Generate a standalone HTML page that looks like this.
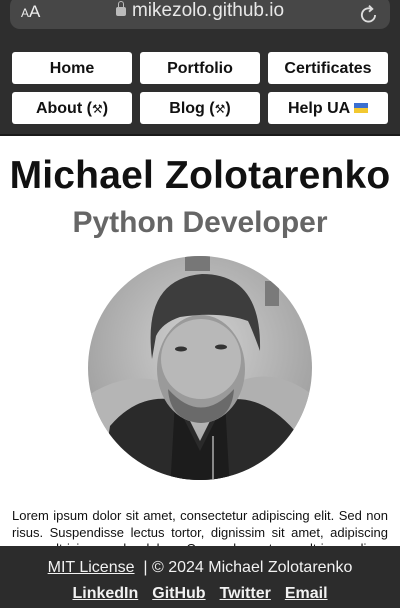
<!DOCTYPE html>
<html><head><meta charset="utf-8"><style>
*{margin:0;padding:0;box-sizing:border-box}
body{width:400px;height:608px;overflow:hidden;background:#fff;font-family:"Liberation Sans",Arial,sans-serif;position:relative}
.top{position:absolute;left:0;top:0;width:400px;height:136px;background:#2e2e2e;border-bottom:2px solid #1a1a1a}
.url{position:absolute;left:10px;top:-4px;width:380px;height:33px;background:#474747;border-radius:10px;color:#eee}
.aa{position:absolute;left:11px;top:6px;font-size:17px}
.aa small{font-size:12px}
.dom{position:absolute;left:0;width:100%;top:4px;text-align:center;font-size:19px;color:#e8e8e8}
.lock{display:inline-block;width:10px;height:9px;background:#bbb;border-radius:2px;margin-right:6px;position:relative;top:0}
.lock:before{content:"";position:absolute;left:2px;top:-6px;width:6px;height:6px;border:1.6px solid #bbb;border-bottom:none;border-radius:4px 4px 0 0;box-sizing:border-box}
.btn{position:absolute;width:120px;height:32px;background:#fff;border-radius:3px;text-align:center;line-height:34px;font-size:16px;font-weight:bold;color:#111}
.btn i{font-style:normal;font-weight:normal;font-size:12px}
h1{position:absolute;top:154px;width:100%;text-align:center;font-size:39px;font-weight:bold;color:#111;letter-spacing:0.2px}
h2{position:absolute;top:206px;width:100%;text-align:center;font-size:30px;font-weight:bold;color:#666}
.photo{position:absolute;left:88px;top:256px;width:224px;height:224px;border-radius:50%;overflow:hidden}
p{position:absolute;left:12px;top:508px;width:376px;font-size:13px;line-height:16.5px;text-align:justify;color:#111}
.foot{position:absolute;left:0;top:546px;width:400px;height:62px;background:#2c2c2c;color:#f2f2f2;text-align:center}
.f1{margin-top:13px;font-size:16px}
.f1 a{color:#f2f2f2;text-decoration:underline}
.f2{margin-top:8px;font-size:16px;font-weight:bold}
.f2 a{color:#f2f2f2;text-decoration:underline;margin:0 7px}
.flag{display:inline-block;width:14px;height:10px;background:linear-gradient(#3a6fd0 50%,#f2c830 50%);vertical-align:0}
</style></head><body>
<div class="top">
<div class="url"><span class="aa"><small>A</small>A</span><div class="dom"><span class="lock"></span>mikezolo.github.io</div>
<svg style="position:absolute;right:10px;top:8px" width="22" height="22" viewBox="0 0 20 20"><path d="M15.5 10a6 6 0 1 1-3-5.2" fill="none" stroke="#ddd" stroke-width="1.7"/><path d="M10 1.5l3 3-3 2.5" fill="none" stroke="#ddd" stroke-width="1.7"/></svg></div>
<div class="btn" style="left:12px;top:52px">Home</div>
<div class="btn" style="left:140px;top:52px">Portfolio</div>
<div class="btn" style="left:268px;top:52px">Certificates</div>
<div class="btn" style="left:12px;top:92px">About (<i>⚒</i>)</div>
<div class="btn" style="left:140px;top:92px">Blog (<i>⚒</i>)</div>
<div class="btn" style="left:268px;top:92px">Help UA <span class="flag"></span></div>
</div>
<h1>Michael Zolotarenko</h1>
<h2>Python Developer</h2>
<div class="photo"><svg width="224" height="224" viewBox="8 5 224 224">
<defs><radialGradient id="bg" cx="50%" cy="40%" r="60%"><stop offset="0" stop-color="#d2d2d2"/><stop offset="1" stop-color="#999"/></radialGradient></defs>
<rect x="0" y="0" width="240" height="240" fill="url(#bg)"/>
<rect x="105" y="5" width="25" height="15" fill="#777"/>
<rect x="185" y="30" width="14" height="25" fill="#7a7a7a"/>
<path d="M0 150 Q40 120 80 130 L80 240 L0 240Z" fill="#b5b5b5"/>
<path d="M240 150 Q200 115 160 130 L160 240 L240 240Z" fill="#b0b0b0"/>
<path d="M30 175 Q60 140 100 150 L120 190 L140 150 Q180 140 215 180 L225 240 L20 240Z" fill="#2a2a2a"/>
<path d="M95 150 L120 200 L145 150 L150 240 L90 240Z" fill="#1c1c1c"/>
<line x1="133" y1="185" x2="133" y2="240" stroke="#888" stroke-width="2"/>
<ellipse cx="121" cy="118" rx="44" ry="54" fill="#9a9a9a"/>
<ellipse cx="121" cy="108" rx="40" ry="40" fill="#b8b8b8"/>
<path d="M88 138 Q121 175 154 138 Q152 170 121 172 Q90 170 88 138Z" fill="#6a6a6a"/>
<ellipse cx="101" cy="98" rx="6" ry="2.5" fill="#333"/><ellipse cx="141" cy="96" rx="6" ry="2.5" fill="#333"/>
<path d="M72 108 Q62 28 122 23 Q182 23 180 100 Q172 78 168 70 Q140 60 100 66 Q82 72 76 85Z" fill="#3d3d3d"/>
</svg></div>
<p>Lorem ipsum dolor sit amet, consectetur adipiscing elit. Sed non risus. Suspendisse lectus tortor, dignissim sit amet, adipiscing nec, ultricies sed, dolor. Cras elementum ultrices diam. Maecenas</p>
<div class="foot">
<div class="f1"><a>MIT License</a> &nbsp;| © 2024 Michael Zolotarenko</div>
<div class="f2"><a>LinkedIn</a><a>GitHub</a><a>Twitter</a><a>Email</a></div>
</div>
</body></html>
